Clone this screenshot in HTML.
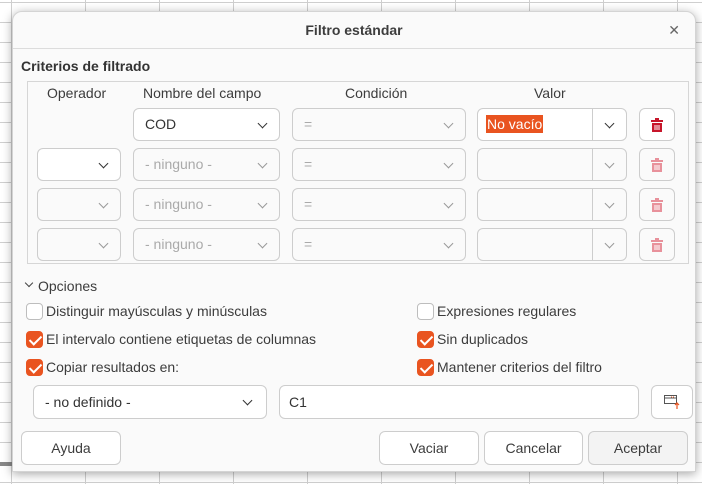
<!DOCTYPE html>
<html><head><meta charset="utf-8"><style>
*{box-sizing:border-box;margin:0;padding:0}
body{width:702px;height:484px;overflow:hidden;position:relative;font-family:"Liberation Sans",sans-serif;font-size:14px;color:#3c3c3c;
background-color:#fff;
background-image:linear-gradient(#cfcfcf 1px,transparent 1px),linear-gradient(90deg,#cfcfcf 1px,transparent 1px);
background-size:74px 20px,74px 20px;background-position:0 2px,11px 0}
.bar{position:absolute;left:0;top:462px;width:40px;height:4px;background:#888}
.dlg{position:absolute;left:12px;top:11px;width:684px;height:461px;background:#fafafa;border-radius:10px 10px 0 0;box-shadow:0 2px 10px rgba(0,0,0,.35);border:1px solid #d4d4d4}
.a{position:absolute}
.title{left:0;top:0;width:100%;height:37px;border-bottom:1px solid #dcdcdc;text-align:center;line-height:37px;font-weight:bold;color:#3d3d3d;font-size:14px}
.x{right:15px;top:10px;font-size:14px;color:#666}
.frame{left:14px;top:69px;width:662px;height:183px;border:1px solid #d6d6d6}
.box{position:absolute;border:1px solid #cdcdcd;border-radius:6px;background:#fafafa;height:33px;line-height:31px;padding-left:11px;color:#aaa}
.en{background:#fff;color:#333}
.chev{position:absolute;top:11px;width:7px;height:7px;border-right:1.3px solid #999;border-bottom:1.3px solid #999;transform:rotate(45deg)}
.en .chev{border-color:#333}
.div{position:absolute;top:0;bottom:0;width:1px;background:#cdcdcd}
.hdr{top:73px;color:#3c3c3c}
.cb{position:absolute;width:17px;height:17px;border:1px solid #bdbdbd;border-radius:4px;background:#fff}
.cb.on{background:#e95420;border-color:#e95420}
.cb.on:after{content:"";position:absolute;left:5px;top:1px;width:5px;height:10px;border-right:2px solid #fff;border-bottom:2px solid #fff;transform:rotate(45deg)}
.lbl{position:absolute;color:#3c3c3c}
.btn{position:absolute;top:419px;height:34px;border:1px solid #cdcdcd;border-radius:6px;background:#fff;text-align:center;line-height:32px;color:#3c3c3c}
</style></head><body>
<div class="bar"></div>
<div class="dlg">
<div class="a title">Filtro estándar</div>
<div class="a x">✕</div>
<div class="a" style="left:8px;top:46px;font-weight:bold;color:#333">Criterios de filtrado</div>
<div class="a frame"></div>
<div class="a hdr" style="left:34px">Operador</div>
<div class="a hdr" style="left:130px">Nombre del campo</div>
<div class="a hdr" style="left:332px">Condición</div>
<div class="a hdr" style="left:521px">Valor</div>

<div class="box en" style="left:120px;top:96px;width:147px">COD<span class="chev" style="right:13px"></span></div>
<div class="box" style="left:279px;top:96px;width:174px">=<span class="chev" style="right:13px"></span></div>
<div class="box en" style="left:464px;top:96px;width:150px;padding-left:8px"><span style="background:#e95420;color:#fff;padding:1px 1px">No vacío</span><span class="div" style="left:114px"></span><span class="chev" style="right:13px"></span></div>
<div class="box en" style="left:626px;top:96px;width:36px"></div>
<svg class="a" style="left:637px;top:105px" width="14" height="16" viewBox="0 0 14 16"><path d="M5 1h4v2h4v2H1V3h4z M2 6h10v9H2z" fill="#c7162b"/><path d="M5 8v5M7 8v5M9 8v5" stroke="#fff" stroke-width="1"/></svg>

<div class="box en" style="left:24px;top:136px;width:84px"><span class="chev" style="right:13px"></span></div>
<div class="box" style="left:24px;top:176px;width:84px"><span class="chev" style="right:13px"></span></div>
<div class="box" style="left:24px;top:216px;width:84px"><span class="chev" style="right:13px"></span></div>

<div class="box" style="left:120px;top:136px;width:147px">- ninguno -<span class="chev" style="right:13px"></span></div>
<div class="box" style="left:120px;top:176px;width:147px">- ninguno -<span class="chev" style="right:13px"></span></div>
<div class="box" style="left:120px;top:216px;width:147px">- ninguno -<span class="chev" style="right:13px"></span></div>

<div class="box" style="left:279px;top:136px;width:174px">=<span class="chev" style="right:13px"></span></div>
<div class="box" style="left:279px;top:176px;width:174px">=<span class="chev" style="right:13px"></span></div>
<div class="box" style="left:279px;top:216px;width:174px">=<span class="chev" style="right:13px"></span></div>

<div class="box" style="left:464px;top:136px;width:150px"><span class="div" style="left:114px"></span><span class="chev" style="right:13px"></span></div>
<div class="box" style="left:464px;top:176px;width:150px"><span class="div" style="left:114px"></span><span class="chev" style="right:13px"></span></div>
<div class="box" style="left:464px;top:216px;width:150px"><span class="div" style="left:114px"></span><span class="chev" style="right:13px"></span></div>

<div class="box" style="left:626px;top:136px;width:36px"></div>
<div class="box" style="left:626px;top:176px;width:36px"></div>
<div class="box" style="left:626px;top:216px;width:36px"></div>
<svg class="a" style="left:637px;top:145px" width="14" height="16" viewBox="0 0 14 16"><path d="M5 1h4v2h4v2H1V3h4z M2 6h10v9H2z" fill="#e8919b"/><path d="M5 8v5M7 8v5M9 8v5" stroke="#fff"/></svg>
<svg class="a" style="left:637px;top:185px" width="14" height="16" viewBox="0 0 14 16"><path d="M5 1h4v2h4v2H1V3h4z M2 6h10v9H2z" fill="#e8919b"/><path d="M5 8v5M7 8v5M9 8v5" stroke="#fff"/></svg>
<svg class="a" style="left:637px;top:225px" width="14" height="16" viewBox="0 0 14 16"><path d="M5 1h4v2h4v2H1V3h4z M2 6h10v9H2z" fill="#e8919b"/><path d="M5 8v5M7 8v5M9 8v5" stroke="#fff"/></svg>

<span class="chev a" style="left:13px;top:268px;width:6px;height:6px;border-color:#444;border-width:1px"></span>
<div class="lbl" style="left:25px;top:266px">Opciones</div>
<div class="cb" style="left:13px;top:291px"></div><div class="lbl" style="left:33px;top:291px">Distinguir mayúsculas y minúsculas</div>
<div class="cb on" style="left:13px;top:319px"></div><div class="lbl" style="left:33px;top:319px">El intervalo contiene etiquetas de columnas</div>
<div class="cb on" style="left:13px;top:347px"></div><div class="lbl" style="left:33px;top:347px">Copiar resultados en:</div>
<div class="cb" style="left:404px;top:291px"></div><div class="lbl" style="left:424px;top:291px">Expresiones regulares</div>
<div class="cb on" style="left:404px;top:319px"></div><div class="lbl" style="left:424px;top:319px">Sin duplicados</div>
<div class="cb on" style="left:404px;top:347px"></div><div class="lbl" style="left:424px;top:347px">Mantener criterios del filtro</div>

<div class="box en" style="left:20px;top:373px;width:234px;height:34px;line-height:32px">- no definido -<span class="chev" style="right:15px;top:11px"></span></div>
<div class="box en" style="left:266px;top:373px;width:360px;height:34px;line-height:32px;padding-left:9px">C1</div>
<div class="box en" style="left:638px;top:373px;width:42px;height:34px"></div>
<svg class="a" style="left:650px;top:382px" width="18" height="16" viewBox="0 0 18 16"><rect x="1.5" y="1.5" width="12" height="8" fill="none" stroke="#555"/><path d="M2 4h11" stroke="#555"/><path d="M8 3h1M10 3h1" stroke="#e95420"/><path d="M14 15V9M12 11l2-2 2 2" stroke="#e95420" fill="none" stroke-width="1.2"/></svg>

<div class="btn" style="left:8px;width:100px">Ayuda</div>
<div class="btn" style="left:366px;width:100px">Vaciar</div>
<div class="btn" style="left:471px;width:99px">Cancelar</div>
<div class="btn" style="left:575px;width:100px;background:#f3f3f3">Aceptar</div>
</div>
</body></html>
